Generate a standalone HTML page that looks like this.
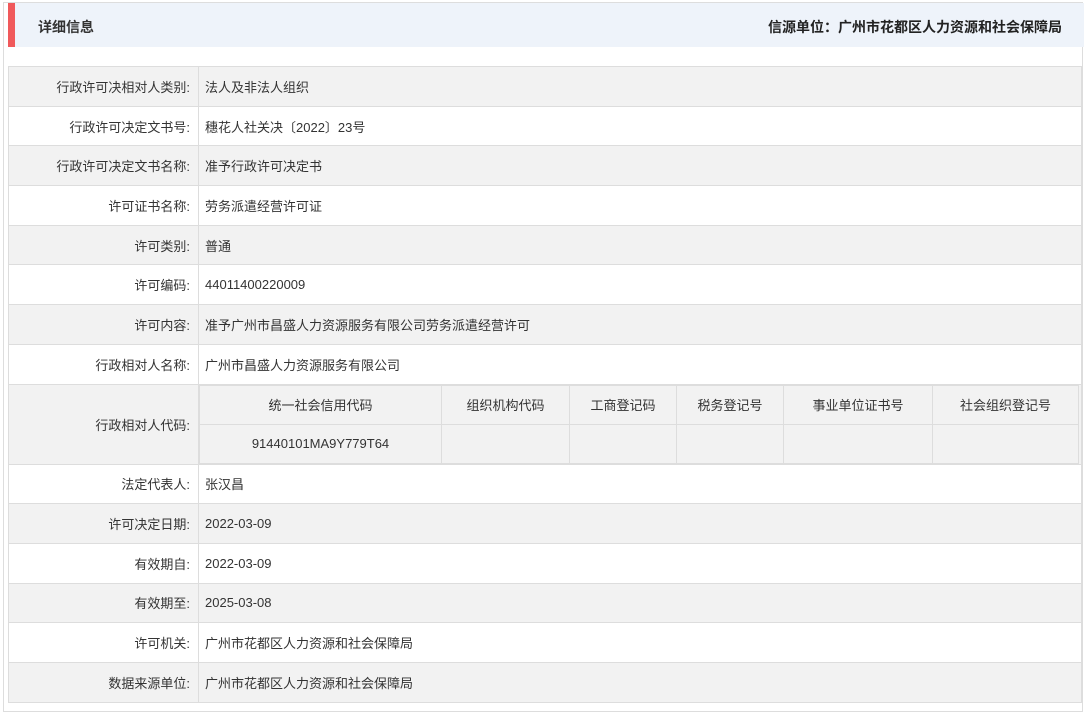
<!DOCTYPE html>
<html><head><meta charset="utf-8"><style>
*{margin:0;padding:0;box-sizing:border-box}
body{width:1085px;height:713px;background:#fff;font-family:"Liberation Sans","Noto Sans CJK SC",sans-serif;font-size:13px;color:#333;position:relative;overflow:hidden}
.frame{position:absolute;left:3px;top:2px;width:1080px;height:710px;border:1px solid #ddd}
.hd{position:absolute;left:8px;top:3px;width:1076px;height:44px;background:#eef3fa;border-left:7px solid #f0595b}
.hd .t{position:absolute;left:23px;top:14px;font-weight:bold;font-size:14px;color:#333}
.hd .r{position:absolute;right:22px;top:14px;font-weight:bold;font-size:14px;color:#222}
table.m{position:absolute;left:8px;top:66px;width:1074px;border-collapse:collapse}
table.m>tbody>tr>td{border:1px solid #ddd;height:39.7px;vertical-align:middle}
table.m td.l{width:190px;text-align:right;padding-right:8px}
table.m td.v{padding-left:6px}
tr.g>td{background:#f2f2f2}
table.s{width:100%;border-collapse:collapse;margin:0}
table.s td{border:1px solid #ddd;height:39px;text-align:center;background:#f2f2f2}
</style></head><body>
<div class="frame"></div>
<div class="hd"><span class="t">详细信息</span><span class="r">信源单位：广州市花都区人力资源和社会保障局</span></div>
<table class="m"><tbody>
<tr class="g"><td class="l">行政许可决相对人类别:</td><td class="v">法人及非法人组织</td></tr>
<tr><td class="l">行政许可决定文书号:</td><td class="v">穗花人社关决〔2022〕23号</td></tr>
<tr class="g"><td class="l">行政许可决定文书名称:</td><td class="v">准予行政许可决定书</td></tr>
<tr><td class="l">许可证书名称:</td><td class="v">劳务派遣经营许可证</td></tr>
<tr class="g"><td class="l">许可类别:</td><td class="v">普通</td></tr>
<tr><td class="l">许可编码:</td><td class="v">44011400220009</td></tr>
<tr class="g"><td class="l">许可内容:</td><td class="v">准予广州市昌盛人力资源服务有限公司劳务派遣经营许可</td></tr>
<tr><td class="l">行政相对人名称:</td><td class="v">广州市昌盛人力资源服务有限公司</td></tr>
<tr class="g"><td class="l">行政相对人代码:</td><td style="padding:0 2px 0 0;height:80px">
<table class="s"><tr><td style="width:242px">统一社会信用代码</td><td style="width:128px">组织机构代码</td><td style="width:107px">工商登记码</td><td style="width:107px">税务登记号</td><td style="width:149px">事业单位证书号</td><td>社会组织登记号</td></tr>
<tr><td>91440101MA9Y779T64</td><td></td><td></td><td></td><td></td><td></td></tr></table></td></tr>
<tr><td class="l">法定代表人:</td><td class="v">张汉昌</td></tr>
<tr class="g"><td class="l">许可决定日期:</td><td class="v">2022-03-09</td></tr>
<tr><td class="l">有效期自:</td><td class="v">2022-03-09</td></tr>
<tr class="g"><td class="l">有效期至:</td><td class="v">2025-03-08</td></tr>
<tr><td class="l">许可机关:</td><td class="v">广州市花都区人力资源和社会保障局</td></tr>
<tr class="g"><td class="l">数据来源单位:</td><td class="v">广州市花都区人力资源和社会保障局</td></tr>
</tbody></table>
</body></html>
